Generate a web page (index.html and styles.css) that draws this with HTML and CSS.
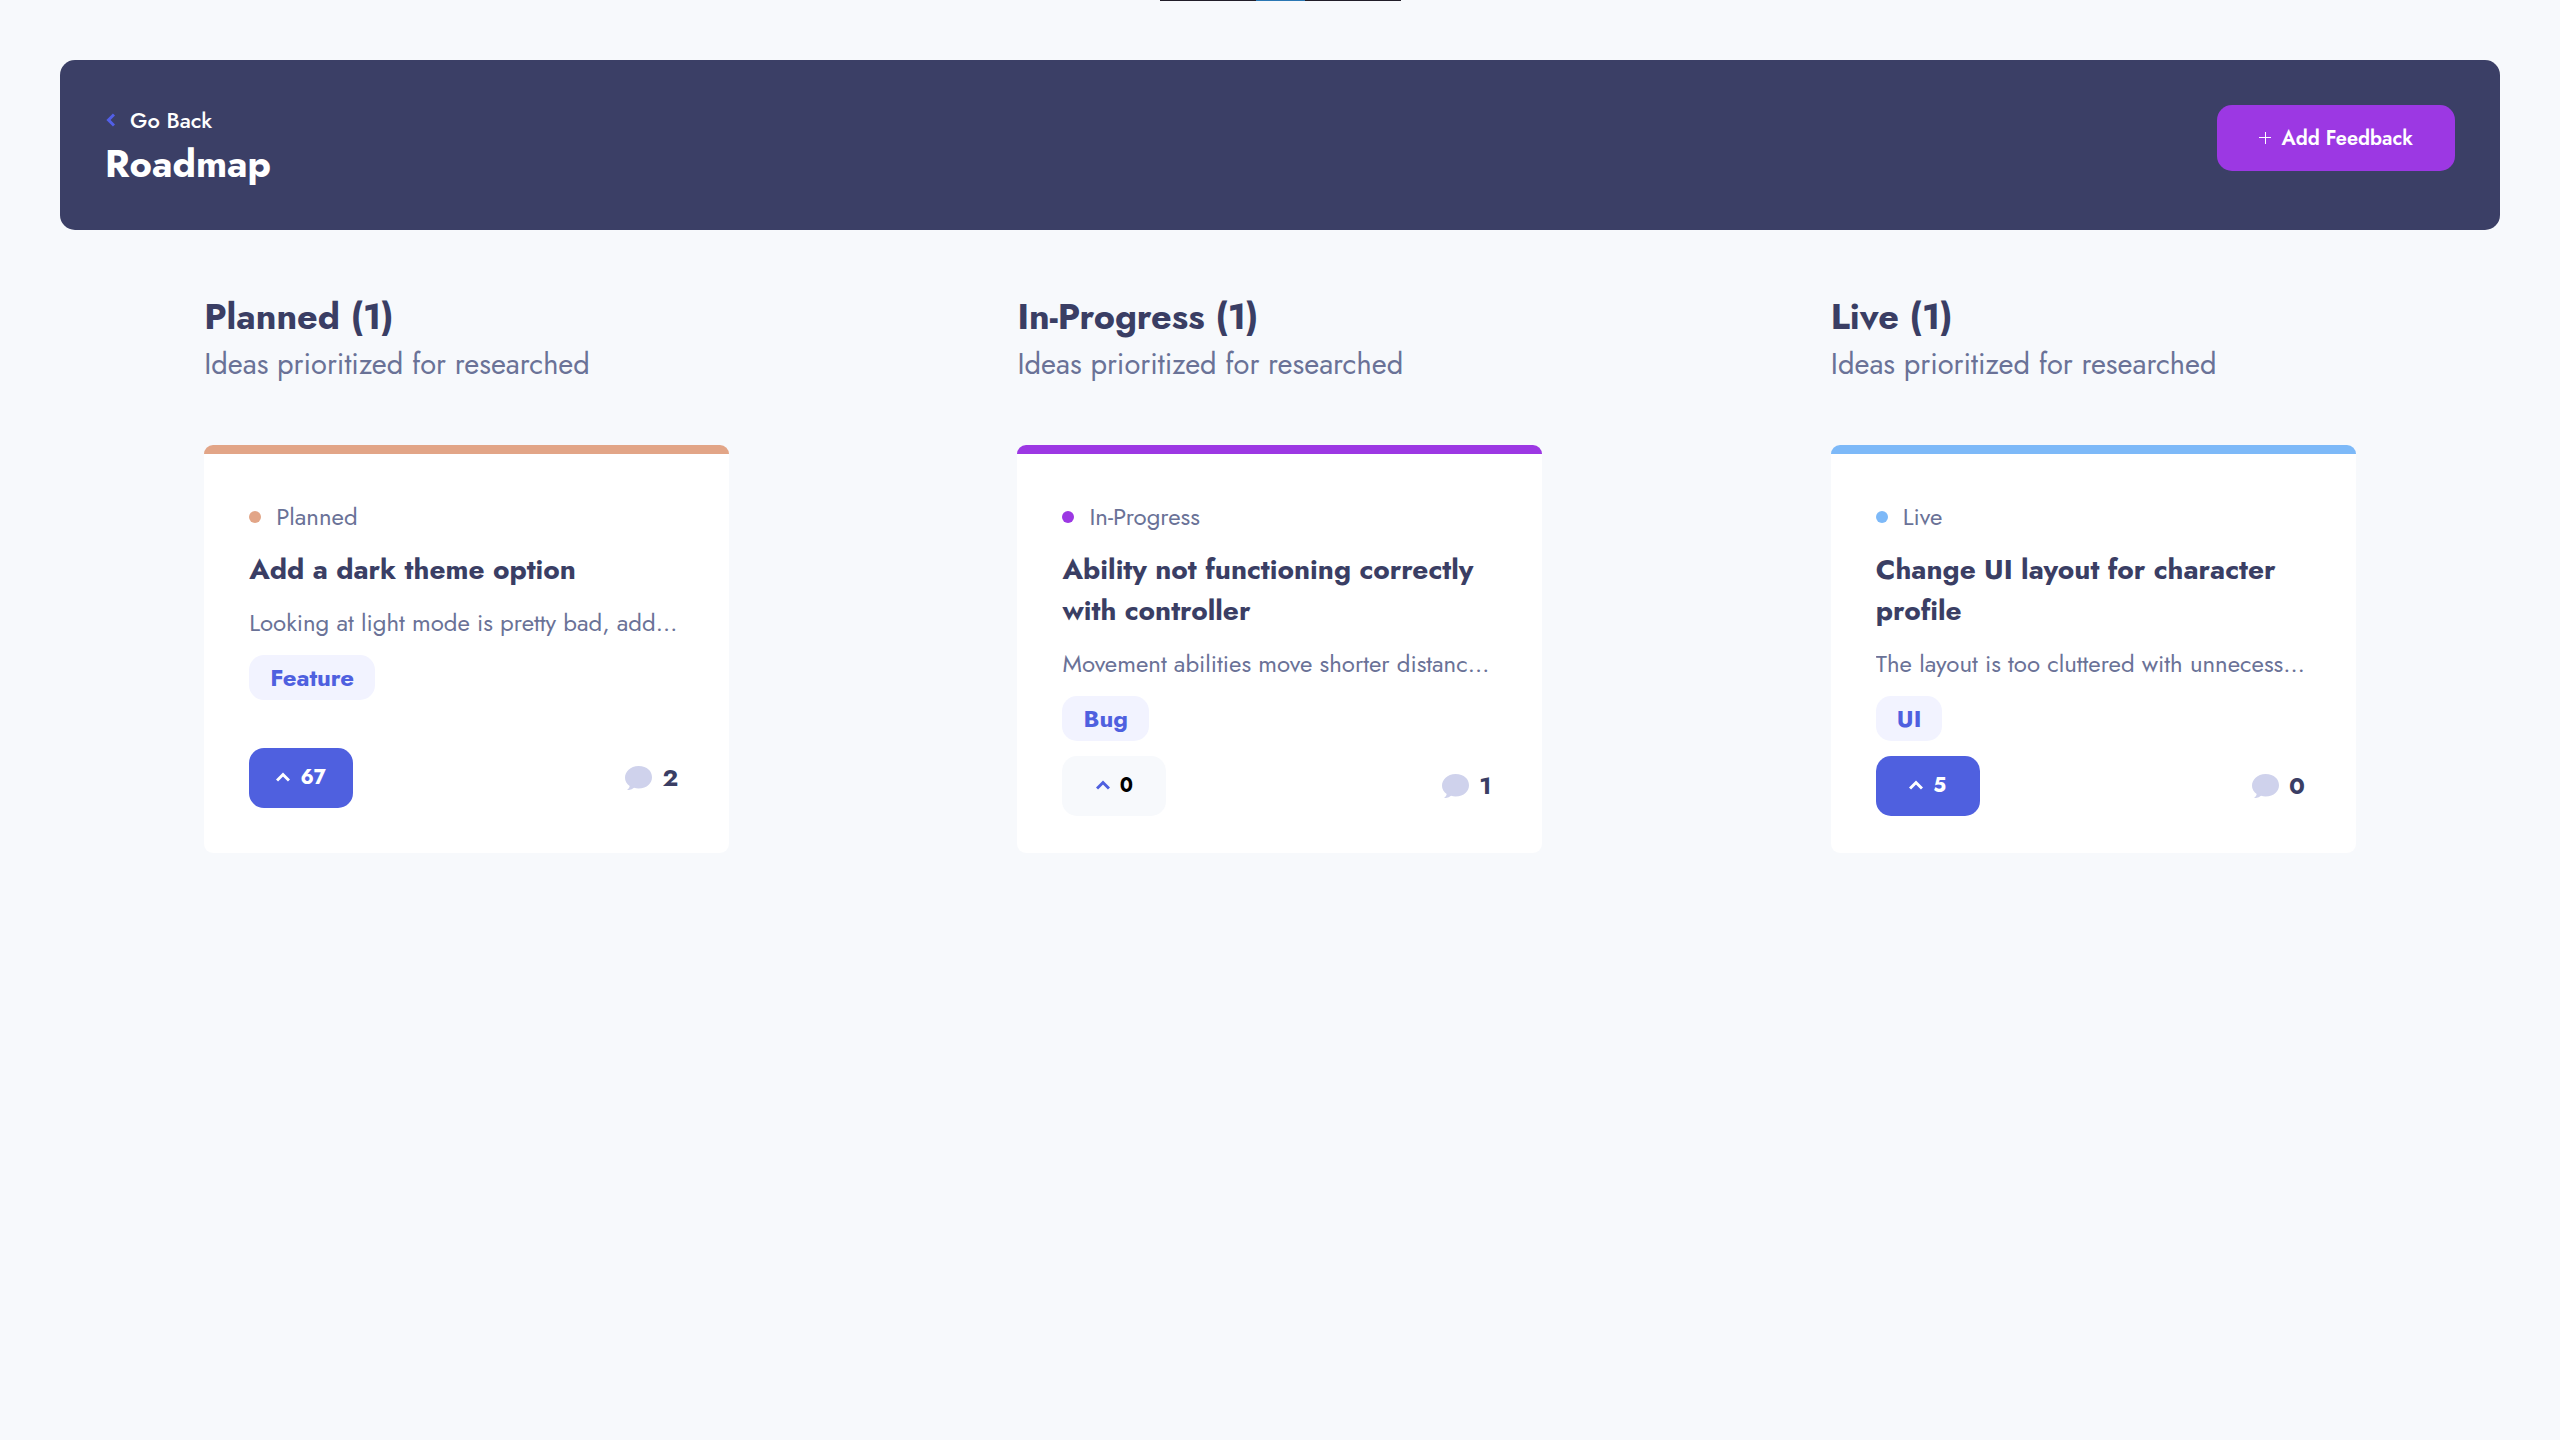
FILE: index.html
```
<!DOCTYPE html>
<html lang="en">
<head>
  <meta charset="utf-8">
  <meta name="viewport" content="width=device-width, initial-scale=1">
  <title>Roadmap</title>
  <link rel="stylesheet" href="styles.css">
</head>
<body>
  <div class="top-handle"></div>
  <header class="page-header">
    <div>
      <a class="back" href="#">
        <svg class="back-icon" viewBox="0 0 10 14" aria-hidden="true"><path d="M9 1.5L3.5 7L9 12.5"/></svg>
        Go Back
      </a>
      <h1 class="page-title">Roadmap</h1>
    </div>
    <button class="add" type="button">
      <svg class="add-icon" viewBox="0 0 12 12" aria-hidden="true"><path d="M6.5 0v12M0 5.5h12"/></svg>
      Add Feedback
    </button>
  </header>

  <main class="board">
    <section class="column planned">
      <h2 class="column-title">Planned (1)</h2>
      <p class="column-note">Ideas prioritized for researched</p>
      <article class="card">
        <div class="card-body">
          <p class="status"><span class="dot"></span>Planned</p>
          <h3 class="card-title">Add a dark theme option</h3>
          <p class="card-text">Looking at light mode is pretty bad, add…</p>
          <span class="tag">Feature</span>
        </div>
        <footer class="card-foot">
          <button class="vote voted" type="button">
            <svg class="vote-icon" viewBox="0 0 14 10" aria-hidden="true"><path d="M1 8.5L7 2.5l6 6"/></svg>
            67
          </button>
          <a class="comments" href="#">
            <svg class="comments-icon" viewBox="0 0 18 16" aria-hidden="true"><path d="M2.62 16H1.346l.902-.91c.486-.491.79-1.13.872-1.823C1.036 11.887 0 9.89 0 7.794 0 3.928 3.52 0 9.03 0 14.87 0 18 3.615 18 7.455c0 3.866-3.164 7.478-8.97 7.478-1.017 0-2.078-.137-3.025-.372A4.665 4.665 0 012.62 16z"/></svg>
            2
          </a>
        </footer>
      </article>
    </section>

    <section class="column progress">
      <h2 class="column-title">In-Progress (1)</h2>
      <p class="column-note">Ideas prioritized for researched</p>
      <article class="card">
        <div class="card-body">
          <p class="status"><span class="dot"></span>In-Progress</p>
          <h3 class="card-title">Ability not functioning correctly with controller</h3>
          <p class="card-text">Movement abilities move shorter distanc…</p>
          <span class="tag">Bug</span>
        </div>
        <footer class="card-foot">
          <button class="vote" type="button">
            <svg class="vote-icon" viewBox="0 0 14 10" aria-hidden="true"><path d="M1 8.5L7 2.5l6 6"/></svg>
            0
          </button>
          <a class="comments" href="#">
            <svg class="comments-icon" viewBox="0 0 18 16" aria-hidden="true"><path d="M2.62 16H1.346l.902-.91c.486-.491.79-1.13.872-1.823C1.036 11.887 0 9.89 0 7.794 0 3.928 3.52 0 9.03 0 14.87 0 18 3.615 18 7.455c0 3.866-3.164 7.478-8.97 7.478-1.017 0-2.078-.137-3.025-.372A4.665 4.665 0 012.62 16z"/></svg>
            1
          </a>
        </footer>
      </article>
    </section>

    <section class="column live">
      <h2 class="column-title">Live (1)</h2>
      <p class="column-note">Ideas prioritized for researched</p>
      <article class="card">
        <div class="card-body">
          <p class="status"><span class="dot"></span>Live</p>
          <h3 class="card-title">Change UI layout for character profile</h3>
          <p class="card-text">The layout is too cluttered with unnecess…</p>
          <span class="tag">UI</span>
        </div>
        <footer class="card-foot">
          <button class="vote voted" type="button">
            <svg class="vote-icon" viewBox="0 0 14 10" aria-hidden="true"><path d="M1 8.5L7 2.5l6 6"/></svg>
            5
          </button>
          <a class="comments" href="#">
            <svg class="comments-icon" viewBox="0 0 18 16" aria-hidden="true"><path d="M2.62 16H1.346l.902-.91c.486-.491.79-1.13.872-1.823C1.036 11.887 0 9.89 0 7.794 0 3.928 3.52 0 9.03 0 14.87 0 18 3.615 18 7.455c0 3.866-3.164 7.478-8.97 7.478-1.017 0-2.078-.137-3.025-.372A4.665 4.665 0 012.62 16z"/></svg>
            0
          </a>
        </footer>
      </article>
    </section>
  </main>
</body>
</html>
```
FILE: styles.css
```
:root {
  --ink: #3a3e64;
  --muted: #6a7297;
  --blue: #4f60df;
  --purple: #9c38e3;
  --page: #f7f9fc;
}

* {
  box-sizing: border-box;
}

body {
  margin: 0;
  min-height: 100vh;
  padding: 60px;
  background: var(--page);
  color: var(--ink);
  font-family: Jost, Lato, sans-serif;
}

h1, h2, h3, p {
  margin: 0;
}

a {
  color: inherit;
  text-decoration: none;
}

button {
  border: 0;
  font-family: inherit;
  cursor: pointer;
}

svg {
  display: block;
  flex: none;
  fill: none;
}

.top-handle {
  position: absolute;
  top: 0;
  left: 0;
  right: 0;
  width: 241px;
  height: 1px;
  margin: 0 auto;
  background: linear-gradient(90deg, #211e29 40%, #2b78b4 40% 60%, #211e29 60%);
}

.page-header {
  display: flex;
  justify-content: space-between;
  align-items: flex-start;
  padding: 45px 45px 37px;
  border-radius: 15px;
  background: #3b3f66;
  color: #fff;
}

.back {
  display: flex;
  align-items: center;
  gap: 15px;
  font-size: 22px;
  font-weight: 500;
  line-height: 30px;
}

.back-icon {
  width: 10px;
  height: 14px;
  stroke: #525fe8;
  stroke-width: 3;
}

.page-title {
  font-size: 38px;
  line-height: 58px;
}

.add {
  display: flex;
  align-items: center;
  gap: 10px;
  height: 66px;
  padding: 0 42px;
  border-radius: 15px;
  background: var(--purple);
  color: #fff;
  font-size: 20px;
  font-weight: 600;
}

.add-icon {
  width: 12px;
  height: 12px;
  stroke: #fff;
}

.board {
  display: grid;
  grid-template-columns: repeat(3, 1fr);
  padding-top: 62px;
}

.column {
  display: flex;
  flex-direction: column;
  width: 525px;
  max-width: 100%;
  margin: 0 auto;
}

.planned { --accent: #e2a587; }
.progress { --accent: var(--purple); }
.live { --accent: #7db9f8; }

.column-title {
  font-size: 36px;
  line-height: 48px;
}

.column-note {
  margin-bottom: 57px;
  color: var(--muted);
  font-size: 29px;
  line-height: 48px;
}

.card {
  flex: 1;
  padding: 54px 45px 37px;
  border-radius: 9px;
  background: linear-gradient(var(--accent) 9px, #fff 9px);
}

.card-body {
  display: flex;
  flex-direction: column;
  align-items: flex-start;
  min-height: 234px;
}

.status {
  display: flex;
  align-items: center;
  gap: 15px;
  margin-bottom: 15px;
  color: var(--muted);
  font-size: 24px;
  line-height: 35px;
}

.dot {
  width: 12px;
  height: 12px;
  border-radius: 50%;
  background: var(--accent);
}

.card-title {
  margin-bottom: 15px;
  font-size: 28px;
  line-height: 41px;
}

.card-text {
  max-width: 100%;
  margin-bottom: 14px;
  overflow: hidden;
  color: var(--muted);
  font-size: 24px;
  line-height: 36px;
  text-overflow: ellipsis;
  white-space: nowrap;
}

.tag {
  padding: 0 21px;
  border-radius: 15px;
  background: #f2f3ff;
  color: var(--blue);
  font-size: 24px;
  font-weight: 700;
  line-height: 45px;
}

.card-foot {
  display: flex;
  justify-content: space-between;
  align-items: center;
  margin-top: 15px;
  padding-right: 6px;
}

.vote {
  display: flex;
  justify-content: center;
  align-items: center;
  gap: 10px;
  min-width: 104px;
  height: 60px;
  padding: 0 20px 2px;
  border-radius: 15px;
  background: var(--page);
  color: #000;
  font-size: 20px;
  font-weight: 700;
}

.vote-icon {
  width: 14px;
  height: 10px;
  stroke: var(--blue);
  stroke-width: 3;
}

.voted {
  background: var(--blue);
  color: #fff;
}

.voted .vote-icon {
  stroke: #fff;
}

.comments {
  display: flex;
  align-items: center;
  gap: 10px;
  font-size: 24px;
  font-weight: 700;
  line-height: 30px;
}

.comments-icon {
  width: 27px;
  height: 24px;
  fill: #cfd2ec;
}
```
